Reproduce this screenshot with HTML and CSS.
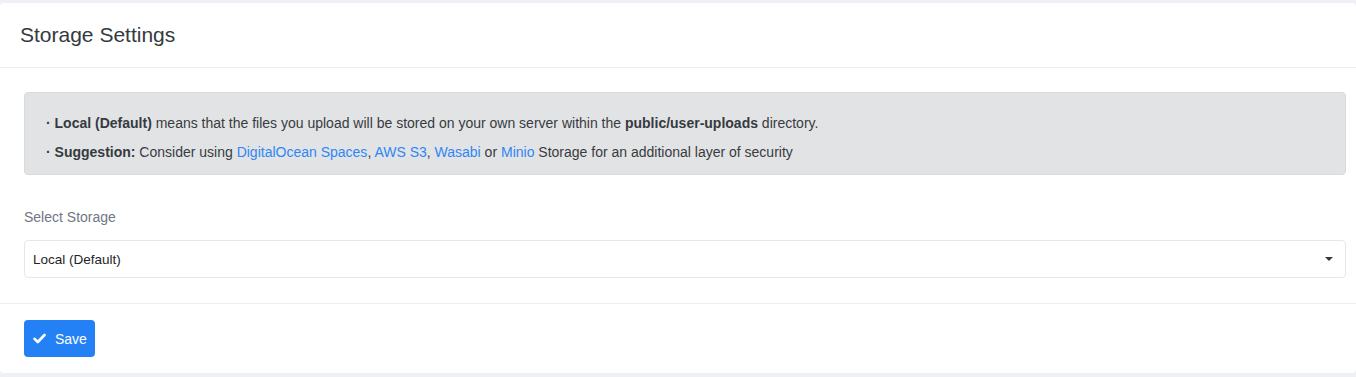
FILE: index.html
```html
<!DOCTYPE html>
<html lang="en">
<head>
  <meta charset="UTF-8">
  <meta name="viewport" content="width=device-width, initial-scale=1.0">
  <title>Storage Settings</title>
  <link rel="stylesheet" href="styles.css">
</head>
<body>
  <div class="card">
    <div class="card-header">
      <h3 class="card-title">Storage Settings</h3>
    </div>

    <div class="card-body">
      <div class="alert">
        <div class="alert-item"><b>·</b> <b>Local (Default)</b> means that the files you upload will be stored on your own server within the <b>public/user-uploads</b> directory.</div>
        <div class="alert-item"><b>·</b> <b>Suggestion:</b> Consider using <a href="#">DigitalOcean Spaces</a>, <a href="#">AWS S3</a>, <a href="#">Wasabi</a> or <a href="#">Minio</a> Storage for an additional layer of security</div>
      </div>

      <div class="form-group">
        <label for="storage">Select Storage</label>
        <div class="select-wrap">
          <select id="storage" class="form-select">
            <option>Local (Default)</option>
            <option>DigitalOcean Spaces</option>
            <option>AWS S3</option>
            <option>Wasabi</option>
            <option>Minio</option>
          </select>
        </div>
      </div>
    </div>

    <div class="card-footer">
      <button type="button" class="btn-save">
        <svg width="13" height="11" viewBox="0 0 13 11"><polyline points="1.5,5.8 4.8,9 11.5,2" fill="none" stroke="#fff" stroke-width="2.6" stroke-linecap="round" stroke-linejoin="round"/></svg>
        Save
      </button>
    </div>
  </div>
</body>
</html>
```

FILE: styles.css
```css
body {
  font-family: "Liberation Sans", Arial, sans-serif;
  margin: 0;
  padding: 3px 0 0;
  background-color: #eff0f5;
  color: #3f4254;
}

.card {
  background: #ffffff;
  border-radius: 4px;
}

.card-header {
  height: 64px;
  display: flex;
  align-items: center;
  padding: 0 20px;
  border-bottom: 1px solid #ebedf2;
}

.card-title {
  margin: 0;
  font-size: 21px;
  font-weight: normal;
  color: #343a40;
}

.card-body {
  padding: 24px 10px 25px 24px;
}

.alert {
  background-color: #e2e3e5;
  border: 1px solid #d9dadd;
  border-radius: 4px;
  padding: 20px 21px 12px;
  font-size: 14px;
  color: #383b40;
}

.alert-item {
  line-height: 20px;
  margin-bottom: 9px;
}

.alert-item:last-child {
  margin-bottom: 0;
}

.alert b {
  color: #343a40;
}

.alert a {
  color: #2f86f6;
  text-decoration: none;
}

.form-group {
  margin-top: 32px;
}

label {
  display: block;
  font-size: 14px;
  line-height: 20px;
  color: #707684;
  margin-bottom: 13px;
}

.select-wrap {
  position: relative;
}

.select-wrap::after {
  content: "";
  position: absolute;
  right: 13px;
  top: 17px;
  border-left: 4px solid transparent;
  border-right: 4px solid transparent;
  border-top: 4px solid #343a40;
  pointer-events: none;
}

.form-select {
  appearance: none;
  -webkit-appearance: none;
  width: 100%;
  height: 38px;
  padding: 0 8px;
  font-family: inherit;
  font-size: 13.5px;
  color: #212529;
  background: #ffffff;
  border: 1px solid #e6e7ee;
  border-radius: 4px;
}

.card-footer {
  border-top: 1px solid #ebedf2;
  padding: 16px 24px;
}

.btn-save {
  display: flex;
  align-items: center;
  gap: 9px;
  height: 37px;
  padding: 0 8px 0 9px;
  background-color: #2381f5;
  color: #ffffff;
  font-family: inherit;
  font-size: 14px;
  border: none;
  border-radius: 4px;
  cursor: pointer;
}
```
